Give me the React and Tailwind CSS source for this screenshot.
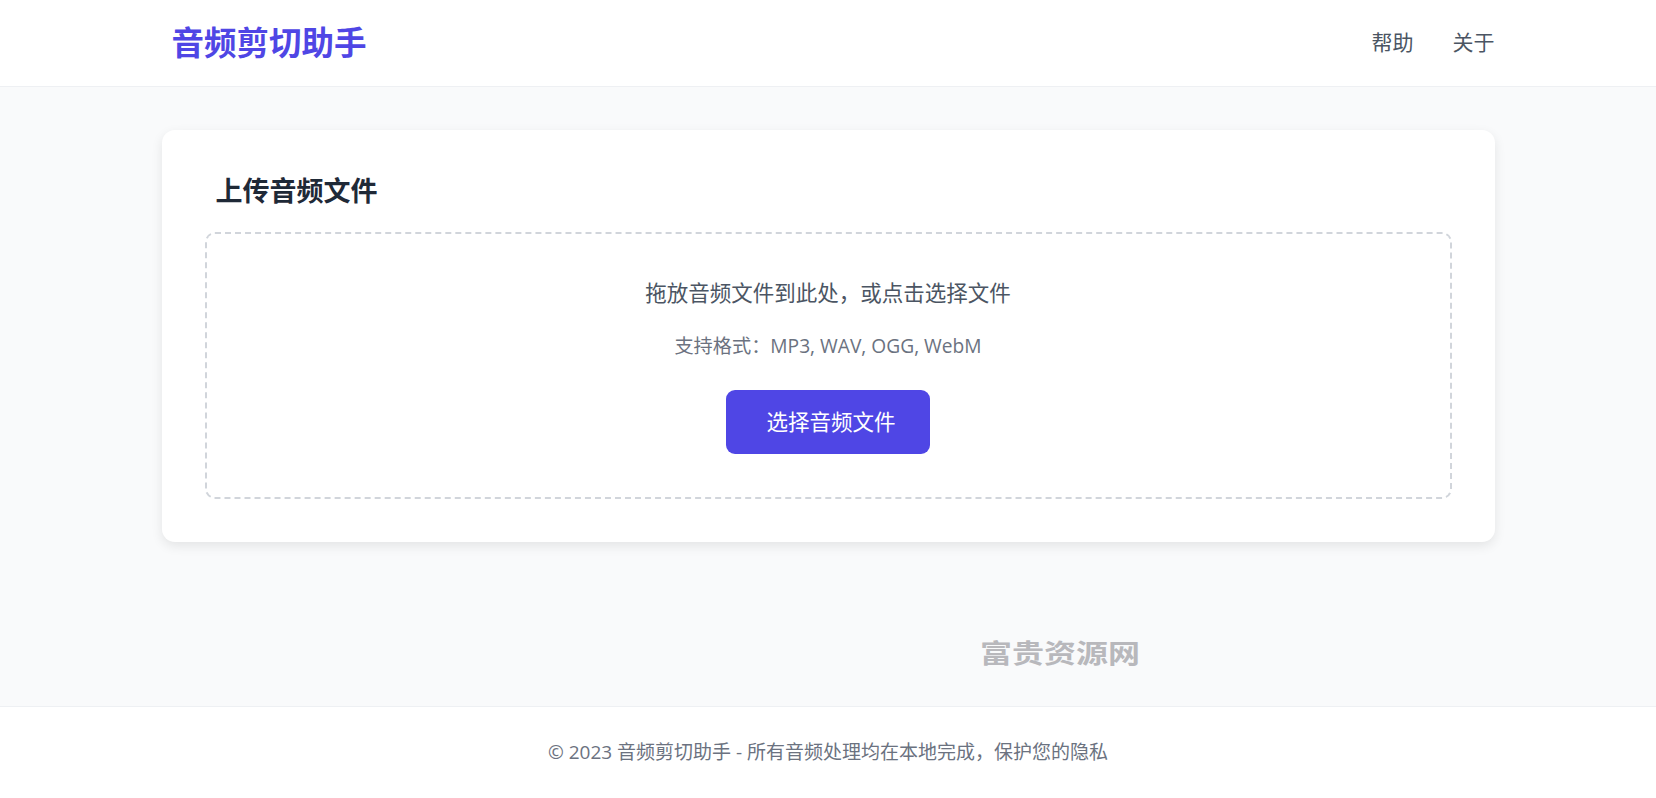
import React from 'react';

const font = { fontFamily: '"Open Sans", "Noto Sans CJK SC", sans-serif' };

export default function App() {
  return (
    <div className="relative min-h-screen flex flex-col bg-[#f9fafb]" style={font}>
      <header className="bg-white border-b border-[#eef0f3] h-[87px] flex items-center">
        <div className="w-[1333px] mx-auto flex items-center justify-between">
          <h1 className="ml-[10px] text-[32.5px] leading-none font-bold text-[#4f46e5]">音频剪切助手</h1>
          <nav className="flex items-center gap-[39px] text-[21px] text-[#4b5563]">
            <a>帮助</a>
            <a>关于</a>
          </nav>
        </div>
      </header>

      <main className="flex-1 pt-[43px]">
        <div className="w-[1333px] mx-auto bg-white rounded-[13px] shadow-[0_4px_12px_rgba(0,0,0,0.09)] p-[43px]">
          <h2 className="ml-[11px] mb-[24px] text-[27px] leading-[35px] font-bold text-[#1f2937]">上传音频文件</h2>
          <div className="border-2 border-dashed border-[#d1d5db] rounded-[10px] p-[43px] flex flex-col items-center">
            <p className="text-[21.5px] leading-[32px] text-[#4b5563] mb-[22px]">拖放音频文件到此处，或点击选择文件</p>
            <p className="text-[19.2px] leading-[29px] text-[#6b7280] mb-[30px]">支持格式：MP3, WAV, OGG, WebM</p>
            <button className="w-[204px] h-[64px] rounded-[9px] bg-[#4f46e5] text-white text-[21.5px] pl-[6px]">选择音频文件</button>
          </div>
        </div>
      </main>

      <footer className="bg-white border-t border-[#eef0f3] h-[92px] flex items-center justify-center">
        <p className="text-[19px] text-[#6b7280]">© 2023 音频剪切助手 - 所有音频处理均在本地完成，保护您的隐私</p>
      </footer>

      <div className="absolute left-[980px] top-[638px] text-[26px] leading-[30px] font-bold text-[#b8b8bc] scale-x-[1.23] origin-left select-none">富贵资源网</div>
    </div>
  );
}
